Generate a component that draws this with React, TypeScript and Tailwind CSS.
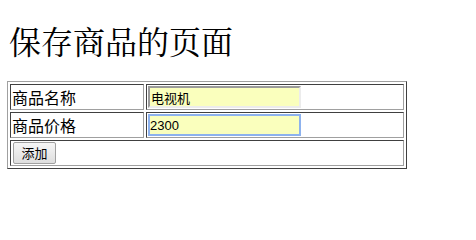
const cjk = "font-['Noto_Serif_CJK_SC','Noto_Sans_CJK_SC',serif]";

const cell =
  'border border-t-[#404040] border-l-[#404040] border-b-[#a0a0a0] border-r-[#a0a0a0] p-px h-[26px] align-middle';

export default function App() {
  return (
    <div className="min-h-[205px] w-[476px] bg-white pl-[7px] text-black">
      <h1 className={`pt-[22px] pl-[2px] text-[32px] leading-[36px] font-normal ${cjk}`}>
        保存商品的页面
      </h1>

      <table className="mt-[23px] w-[400px] border-separate border-spacing-[2px] border border-t-[#a0a0a0] border-l-[#a0a0a0] border-b-[#404040] border-r-[#404040]">
        <tbody>
          <tr>
            <td className={`${cell} w-[134px] text-[16px] leading-[22px] font-['Noto_Sans_CJK_SC',sans-serif]`}>
              商品名称
            </td>
            <td className={`${cell} align-top`}>
              <input
                defaultValue="电视机"
                className="block h-[22px] w-[153px] border-2 border-t-[#9a9a9a] border-l-[#9a9a9a] border-b-[#ececec] border-r-[#ececec] bg-[#faffbd] px-px text-[13px] font-['Liberation_Sans','Noto_Sans_CJK_SC',sans-serif] outline-none"
              />
            </td>
          </tr>
          <tr>
            <td className={`${cell} text-[16px] leading-[22px] font-['Noto_Sans_CJK_SC',sans-serif]`}>
              商品价格
            </td>
            <td className={`${cell} align-top`}>
              <input
                defaultValue="2300"
                className="block h-[22px] w-[153px] border-2 border-[#8db2ee] bg-[#faffbd] px-0 text-[13px] font-['Liberation_Sans','Noto_Sans_CJK_SC',sans-serif] outline-none"
              />
            </td>
          </tr>
          <tr>
            <td colSpan={2} className={cell}>
              <button className="ml-px block h-[22px] w-[43px] rounded-[2px] border border-[#a0a0a0] bg-gradient-to-b from-[#f6f6f6] to-[#dedede] text-[13px] leading-[20px] font-['Noto_Sans_CJK_SC',sans-serif]">
                添加
              </button>
            </td>
          </tr>
        </tbody>
      </table>
    </div>
  );
}
